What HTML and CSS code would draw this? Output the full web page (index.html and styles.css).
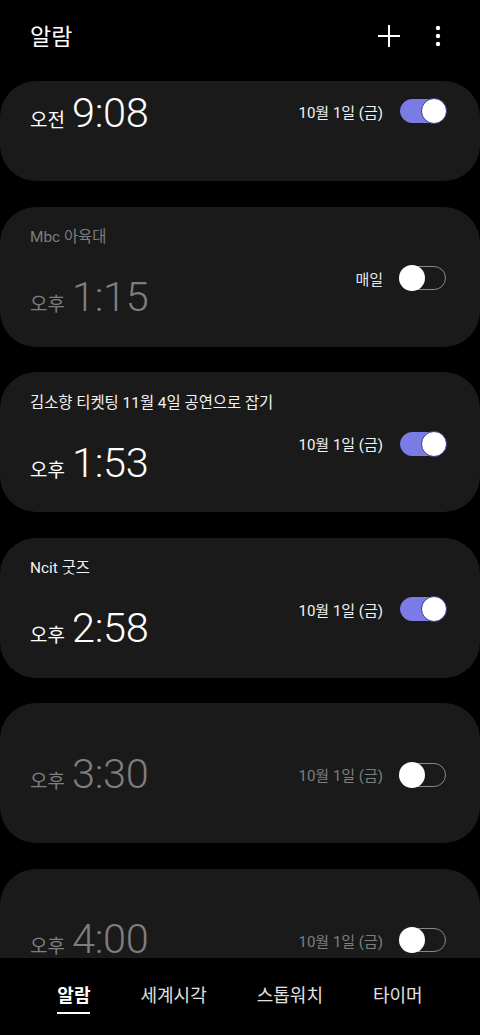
FILE: index.html
```html
<!DOCTYPE html>
<html>
  <head>
    <title>알람</title>
    <link rel="stylesheet" href="styles.css">
  </head>
  <body>
    <div class="app">
      <header class="topbar">
        <h1 class="title">알람</h1>
        <div class="actions">
          <svg class="icon" width="24" height="24" viewBox="0 0 24 24">
            <path d="M12 1v22M1 12h22" stroke="#fff" stroke-width="2" fill="none" />
          </svg>
          <svg class="icon" width="6" height="22" viewBox="0 0 6 22">
            <circle cx="3" cy="3" r="2.2" fill="#fff" />
            <circle cx="3" cy="11" r="2.2" fill="#fff" />
            <circle cx="3" cy="19" r="2.2" fill="#fff" />
          </svg>
        </div>
      </header>

      <main class="list">
        <div class="card card-top">
          <div class="left">
            <div class="time"><span class="ampm">오전</span><span class="clock">9:08</span></div>
          </div>
          <div class="right">
            <span class="date">10월 1일 (금)</span>
            <span class="switch on"><span class="thumb"></span></span>
          </div>
        </div>

        <div class="card off">
          <div class="left">
            <div class="label">Mbc 아육대</div>
            <div class="time"><span class="ampm">오후</span><span class="clock">1:15</span></div>
          </div>
          <div class="right">
            <span class="date bright">매일</span>
            <span class="switch"><span class="thumb"></span></span>
          </div>
        </div>

        <div class="card">
          <div class="left">
            <div class="label">김소향 티켓팅 11월 4일 공연으로 잡기</div>
            <div class="time"><span class="ampm">오후</span><span class="clock">1:53</span></div>
          </div>
          <div class="right">
            <span class="date">10월 1일 (금)</span>
            <span class="switch on"><span class="thumb"></span></span>
          </div>
        </div>

        <div class="card">
          <div class="left">
            <div class="label">Ncit 굿즈</div>
            <div class="time"><span class="ampm">오후</span><span class="clock">2:58</span></div>
          </div>
          <div class="right">
            <span class="date">10월 1일 (금)</span>
            <span class="switch on"><span class="thumb"></span></span>
          </div>
        </div>

        <div class="card off">
          <div class="left">
            <div class="time"><span class="ampm">오후</span><span class="clock">3:30</span></div>
          </div>
          <div class="right">
            <span class="date">10월 1일 (금)</span>
            <span class="switch"><span class="thumb"></span></span>
          </div>
        </div>

        <div class="card off">
          <div class="left">
            <div class="time"><span class="ampm">오후</span><span class="clock">4:00</span></div>
          </div>
          <div class="right">
            <span class="date">10월 1일 (금)</span>
            <span class="switch"><span class="thumb"></span></span>
          </div>
        </div>
      </main>

      <nav class="tabs">
        <span class="tab active">알람</span>
        <span class="tab">세계시각</span>
        <span class="tab">스톱워치</span>
        <span class="tab">타이머</span>
      </nav>
    </div>
  </body>
</html>
```

FILE: styles.css
```css
body {
  margin: 0;
  padding: 0;
  background-color: #000000;
  color: #ffffff;
  font-family: Roboto, "Noto Sans CJK KR", sans-serif;
  overflow: hidden;
}

.app {
  display: flex;
  flex-direction: column;
  height: 1035px;
}

.topbar {
  display: flex;
  justify-content: space-between;
  align-items: center;
  height: 81px;
  padding: 0 39px 10px 30px;
  box-sizing: border-box;
  flex-shrink: 0;
}

.title {
  margin: 0 0 2px;
  font-size: 23px;
  font-weight: 400;
}

.actions {
  display: flex;
  align-items: center;
  gap: 34px;
}

.list {
  flex: 1;
  overflow: hidden;
  display: flex;
  flex-direction: column;
  gap: 25.5px;
}

.card {
  flex-shrink: 0;
  display: flex;
  align-items: center;
  justify-content: space-between;
  height: 140px;
  padding: 3px 34px 0 30px;
  box-sizing: border-box;
  background-color: #1a1a1a;
  border-radius: 36px;
}

.card-top {
  height: 100px;
  align-items: flex-start;
  padding-top: 8px;
}

.card-top .right {
  margin-top: 10px;
}

.left {
  display: flex;
  flex-direction: column;
  gap: 26px;
}

/* alarms without a label sit a little lower */
.card:not(.card-top) .time:first-child {
  margin-top: 6px;
}

.label {
  font-size: 15.4px;
  line-height: 20px;
  color: #f2f2f2;
}

.time {
  display: flex;
  align-items: baseline;
  gap: 7px;
  line-height: 48px;
}

.ampm {
  font-size: 19px;
}

.clock {
  font-size: 41.5px;
  font-weight: 300;
  letter-spacing: -0.3px;
}

.right {
  display: flex;
  align-items: center;
  gap: 17px;
}

.date {
  font-size: 15px;
  color: #f2f2f2;
}

.off .label,
.off .ampm,
.off .clock,
.off .date {
  color: #7e7e7e;
}

.off .date.bright {
  color: #e6e6e6;
}

.switch {
  display: flex;
  align-items: center;
  width: 46px;
  height: 24px;
  border-radius: 12px;
  border: 1.5px solid #8a8a8a;
  box-sizing: border-box;
}

.switch.on {
  background-color: #7b7be6;
  border-color: #7b7be6;
  justify-content: flex-end;
}

.thumb {
  width: 26px;
  height: 26px;
  margin: 0 -2px;
  border-radius: 50%;
  background-color: #ffffff;
  box-sizing: border-box;
}

.switch.on .thumb {
  border: 1.5px solid #3b3b8a;
}

.tabs {
  flex-shrink: 0;
  display: flex;
  justify-content: center;
  gap: 50px;
  height: 77px;
  padding-top: 26px;
  box-sizing: border-box;
  background-color: #000000;
}

.tab {
  font-size: 18px;
  line-height: 24px;
  color: #e0e0e0;
  height: 28px;
}

.tab.active {
  color: #ffffff;
  font-weight: 700;
  border-bottom: 2px solid #ffffff;
}
```
